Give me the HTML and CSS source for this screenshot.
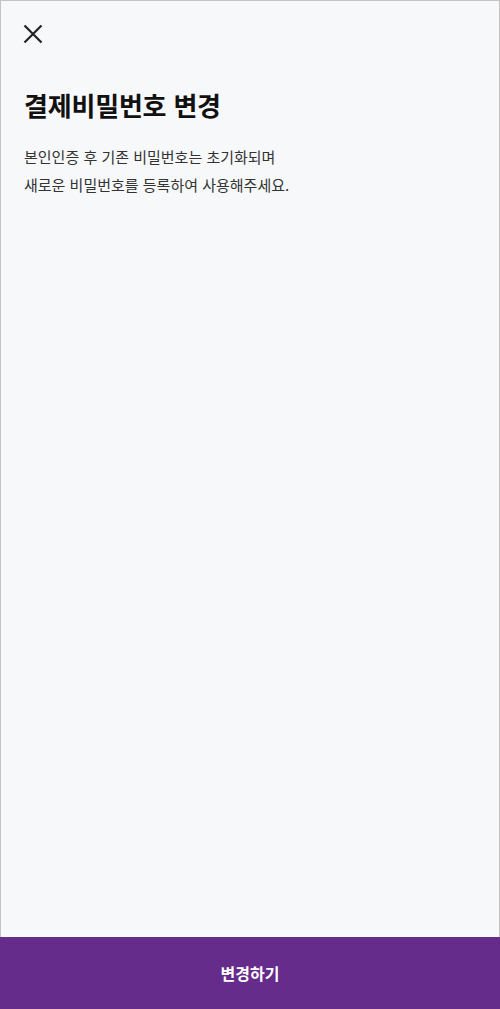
FILE: index.html
```html
<!DOCTYPE html>
<html lang="ko">
<head>
<meta charset="utf-8">
<link rel="stylesheet" href="styles.css">
</head>
<body>
<div class="screen">
  <header class="topbar">
    <button class="close" aria-label="닫기">
      <svg width="20" height="20" viewBox="0 0 20 20"><path d="M1.5 1.5 L18.5 18.5 M18.5 1.5 L1.5 18.5" stroke="#222" stroke-width="2.2" fill="none"/></svg>
    </button>
  </header>
  <main class="content">
    <h1 class="title">결제비밀번호 변경</h1>
    <p class="desc">본인인증 후 기존 비밀번호는 초기화되며<br>새로운 비밀번호를 등록하여 사용해주세요.</p>
  </main>
  <button class="submit">변경하기</button>
</div>
</body>
</html>
```
FILE: styles.css
```css
* { box-sizing: border-box; }
html, body { margin: 0; padding: 0; height: 100%; }
body {
  font-family: "Noto Sans CJK KR", "Noto Sans", sans-serif;
  background: #f7f8fa;
}
.screen {
  height: 1009px;
  display: flex;
  flex-direction: column;
  border: 1px solid #c4c4c4;
  background: #f7f8fa;
}
.topbar {
  height: 68px;
  padding: 23px 0 0 22px;
}
.close {
  border: 0;
  background: none;
  padding: 0;
  width: 20px;
  height: 20px;
  display: block;
}
.close svg { display: block; }
.content {
  flex: 1;
  padding: 0 23px;
}
.title {
  margin: 18px 0 0;
  font-size: 26px;
  font-weight: 700;
  color: #111;
  line-height: 36px;
  letter-spacing: -0.2px;
}
.desc {
  margin: 20px 0 0;
  font-size: 15px;
  line-height: 28px;
  color: #333;
}
.submit {
  height: 72px;
  border: 0;
  margin: 0 -1px -1px;
  background: #652c8c;
  color: #fff;
  font-family: inherit;
  font-size: 16px;
  font-weight: 700;
}
```
